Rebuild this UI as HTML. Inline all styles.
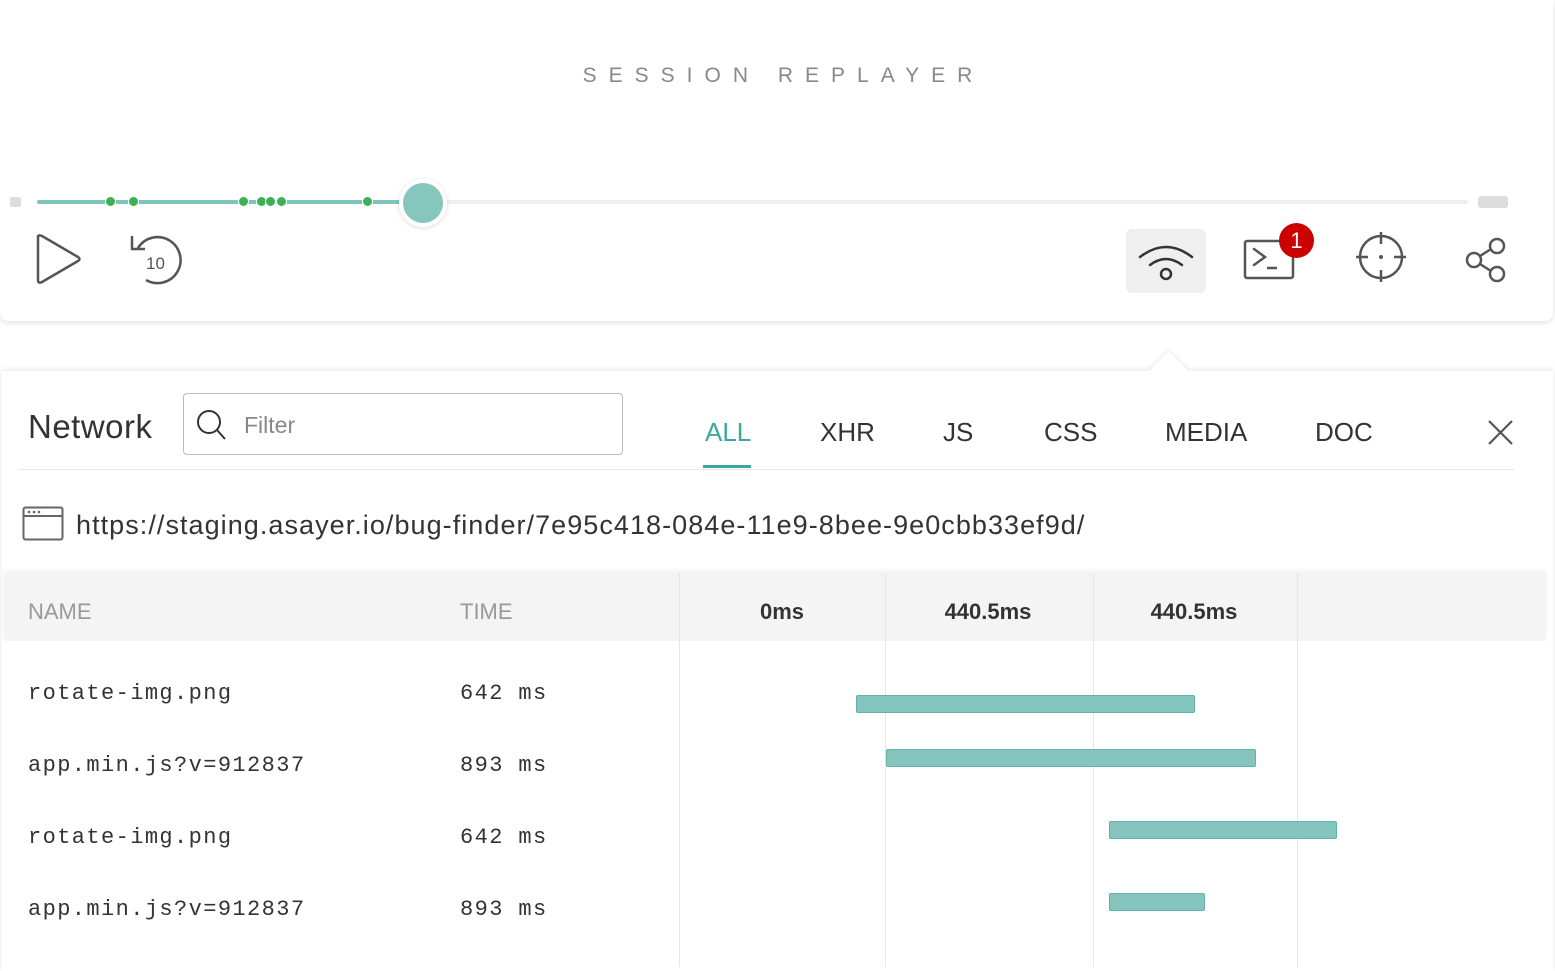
<!DOCTYPE html>
<html><head><meta charset="utf-8"><style>
*{margin:0;padding:0;box-sizing:border-box}
body{width:1555px;height:967px;background:#fff;position:relative;overflow:hidden;font-family:"Liberation Sans",sans-serif;color:#333}
.a{position:absolute}
.top{left:0;top:0;width:1553px;height:321px;background:#fff;border-radius:0 0 8px 8px;box-shadow:0 2px 6px rgba(0,0,0,.12)}
.dot{position:absolute;width:11px;height:11px;border-radius:50%;background:#3cb054;border:1px solid #fff;top:196px}
.panel{left:2px;top:371px;width:1551px;height:600px;background:#fff;box-shadow:0 -1px 6px rgba(0,0,0,.10)}
.tab{position:absolute;top:417px;font-size:26px;color:#333}
.mono{font-family:"Liberation Mono",monospace;font-size:22px;letter-spacing:1.4px;color:#333;position:absolute}
.vl{position:absolute;top:573px;width:1px;height:394px;background:#e6e6e6}
.bar{position:absolute;height:18px;background:#85c5bd;border:1px solid #5fb3a8;border-radius:2px}
</style></head><body>
<div class="a top"></div>
<div class="a" style="left:0;width:1555px;top:64px;text-align:center;font-size:21px;letter-spacing:12px;color:#888;padding-left:12px">SESSION REPLAYER</div>
<div class="a" style="left:10px;top:197px;width:11px;height:10px;background:#ddd;border-radius:2px"></div>
<div class="a" style="left:37px;top:200px;width:1431px;height:4px;background:#eee;border-radius:2px"></div>
<div class="a" style="left:37px;top:200px;width:386px;height:4px;background:#7fc4bb;border-radius:2px"></div>
<div class="a" style="left:1478px;top:196px;width:30px;height:12px;background:#ddd;border-radius:3px"></div>
<div class="dot" style="left:105px"></div><div class="dot" style="left:128px"></div><div class="dot" style="left:238px"></div><div class="dot" style="left:256px"></div><div class="dot" style="left:265px"></div><div class="dot" style="left:276px"></div><div class="dot" style="left:362px"></div>
<div class="a" style="left:399px;top:179px;width:48px;height:48px;border-radius:50%;background:#86c6bd;border:4px solid #fff;box-shadow:0 1px 5px rgba(0,0,0,.15)"></div>
<svg class="a" style="left:30px;top:230px" width="60" height="60"><path d="M8 6 L8 50 Q8 54 12 52 L48 31 Q51 29 48 27 L12 6 Q8 4 8 8Z" fill="none" stroke="#555" stroke-width="2.5" stroke-linejoin="round"/></svg>
<svg class="a" style="left:124px;top:228px" width="60" height="60"><path d="M14 20 A23 23 0 1 1 22 52" fill="none" stroke="#555" stroke-width="2.5"/><path d="M8 8 L8 21 L21 21" fill="none" stroke="#555" stroke-width="2.5"/><text x="22" y="41" font-size="17" fill="#555" font-family="Liberation Sans">10</text></svg>
<div class="a" style="left:1126px;top:229px;width:80px;height:64px;background:#efefef;border-radius:6px"></div>
<svg class="a" style="left:1136px;top:235px" width="60" height="50"><path d="M4 22 Q30 2 56 22" fill="none" stroke="#333" stroke-width="2.5" stroke-linecap="round"/><path d="M14 30 Q30 18 46 30" fill="none" stroke="#333" stroke-width="2.5" stroke-linecap="round"/><circle cx="30" cy="39" r="5" fill="none" stroke="#333" stroke-width="2.5"/></svg>
<svg class="a" style="left:1240px;top:236px" width="60" height="48"><rect x="5" y="5" width="48" height="37" rx="2" fill="none" stroke="#555" stroke-width="2.5"/><path d="M14 13 L25 21 L14 29" fill="none" stroke="#555" stroke-width="2.5" stroke-linecap="round"/><path d="M27 32 L37 32" stroke="#555" stroke-width="2.5"/></svg>
<div class="a" style="left:1279px;top:223px;width:35px;height:35px;border-radius:50%;background:#cc0000;color:#fff;font-size:22px;text-align:center;line-height:35px">1</div>
<svg class="a" style="left:1355px;top:232px" width="52" height="52"><circle cx="26" cy="25" r="21" fill="none" stroke="#555" stroke-width="2.5"/><path d="M26 0V12M26 38V50M1 25H13M39 25H51" stroke="#555" stroke-width="2.5"/><circle cx="26" cy="25" r="2" fill="#555"/></svg>
<svg class="a" style="left:1462px;top:234px" width="50" height="52"><circle cx="35" cy="12" r="7" fill="none" stroke="#555" stroke-width="2.5"/><circle cx="12" cy="26" r="7" fill="none" stroke="#555" stroke-width="2.5"/><circle cx="35" cy="40" r="7" fill="none" stroke="#555" stroke-width="2.5"/><path d="M18 22L29 15M18 30L29 37" stroke="#555" stroke-width="2.5"/></svg>

<div class="a panel"></div>
<div class="a" style="left:1155px;top:357px;width:28px;height:28px;background:#fff;transform:rotate(45deg);box-shadow:-2px -2px 4px rgba(0,0,0,.06)"></div>
<div class="a" style="left:28px;top:408px;font-size:33px;letter-spacing:0.5px;color:#333">Network</div>
<div class="a" style="left:183px;top:393px;width:440px;height:62px;border:1px solid #bbb;border-radius:4px"></div>
<svg class="a" style="left:195px;top:408px" width="34" height="34"><circle cx="14" cy="14" r="11" fill="none" stroke="#333" stroke-width="2"/><path d="M22 22L30 31" stroke="#333" stroke-width="2"/></svg>
<div class="a" style="left:244px;top:412px;font-size:23px;color:#888">Filter</div>
<div class="tab" style="left:705px;color:#3aa8a0">ALL</div>
<div class="tab" style="left:820px">XHR</div>
<div class="tab" style="left:943px">JS</div>
<div class="tab" style="left:1044px">CSS</div>
<div class="tab" style="left:1165px">MEDIA</div>
<div class="tab" style="left:1315px">DOC</div>
<div class="a" style="left:18px;top:469px;width:1496px;height:1px;background:#e8e8e8"></div>
<div class="a" style="left:703px;top:465px;width:48px;height:3px;background:#3aa8a0"></div>
<svg class="a" style="left:1487px;top:419px" width="27" height="27"><path d="M2 2L25 25M25 2L2 25" stroke="#555" stroke-width="2.2"/></svg>
<svg class="a" style="left:22px;top:506px" width="42" height="36"><rect x="1.5" y="1.5" width="39" height="32" rx="2" fill="none" stroke="#666" stroke-width="2"/><path d="M2 10H40" stroke="#666" stroke-width="2"/><circle cx="7" cy="6" r="1.3" fill="#666"/><circle cx="12" cy="6" r="1.3" fill="#666"/><circle cx="17" cy="6" r="1.3" fill="#666"/></svg>
<div class="a" style="left:76px;top:510px;font-size:27px;letter-spacing:1.05px;color:#333">https://staging.asayer.io/bug-finder/7e95c418-084e-11e9-8bee-9e0cbb33ef9d/</div>
<div class="a" style="left:4px;top:573px;width:1542px;height:68px;background:#f4f4f4;box-shadow:0 -3px 4px rgba(0,0,0,.05)"></div>
<div class="a" style="left:28px;top:599px;font-size:22px;color:#999">NAME</div>
<div class="a" style="left:460px;top:599px;font-size:22px;color:#999">TIME</div>
<div class="vl" style="left:679px"></div><div class="vl" style="left:885px"></div><div class="vl" style="left:1093px"></div><div class="vl" style="left:1297px"></div>
<div class="a" style="left:682px;width:200px;top:599px;text-align:center;font-size:22px;font-weight:bold;color:#333">0ms</div>
<div class="a" style="left:888px;width:200px;top:599px;text-align:center;font-size:22px;font-weight:bold;color:#333">440.5ms</div>
<div class="a" style="left:1094px;width:200px;top:599px;text-align:center;font-size:22px;font-weight:bold;color:#333">440.5ms</div>
<div class="mono" style="left:28px;top:681px">rotate-img.png</div><div class="mono" style="left:460px;top:681px">642 ms</div>
<div class="mono" style="left:28px;top:753px">app.min.js?v=912837</div><div class="mono" style="left:460px;top:753px">893 ms</div>
<div class="mono" style="left:28px;top:825px">rotate-img.png</div><div class="mono" style="left:460px;top:825px">642 ms</div>
<div class="mono" style="left:28px;top:897px">app.min.js?v=912837</div><div class="mono" style="left:460px;top:897px">893 ms</div>
<div class="bar" style="left:856px;width:339px;top:695px"></div>
<div class="bar" style="left:886px;width:370px;top:749px"></div>
<div class="bar" style="left:1109px;width:228px;top:821px"></div>
<div class="bar" style="left:1109px;width:96px;top:893px"></div>
</body></html>
